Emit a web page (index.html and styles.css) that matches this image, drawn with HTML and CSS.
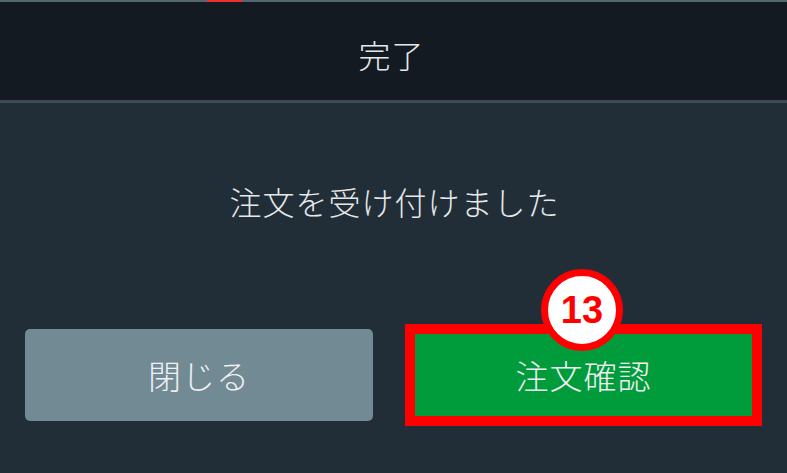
FILE: index.html
```html
<!DOCTYPE html>
<html lang="ja">

<head>
    <meta charset="UTF-8">
    <meta name="viewport" content="width=device-width, initial-scale=1.0">
    <link rel="stylesheet" href="styles.css">
</head>

<body>
    <!-- Obere Leiste -->
    <div class="top-strip">
        <span class="top-mark"></span>
    </div>

    <!-- Kopfbereich -->
    <header class="dialog-header">
        <h1>完了</h1>
    </header>

    <!-- Inhalt des Dialogs -->
    <main class="dialog-body">
        <p class="message">注文を受け付けました</p>

        <div class="actions">
            <button class="btn btn-close">閉じる</button>
            <div class="highlight">
                <span class="badge">13</span>
                <button class="btn btn-confirm">注文確認</button>
            </div>
        </div>
    </main>
</body>

</html>
```

FILE: styles.css
```css
/* Grundlayout */
body {
    margin: 0;
    padding: 0;
    width: 787px;
    height: 473px;
    overflow: hidden;
    background-color: #212e38;
    font-family: 'Noto Sans CJK JP', 'Noto Sans', sans-serif;
    font-weight: 300;
    color: #e6e8ea;
}

/* Dünne Leiste ganz oben */
.top-strip {
    height: 2px;
    background-color: #55656e;
    padding-left: 207px;
}

.top-mark {
    display: block;
    width: 35px;
    height: 2px;
    background-color: #f0302e;
}

/* Kopfbereich */
.dialog-header {
    height: 98px;
    background-color: #131a22;
    border-bottom: 3px solid #3c4b56;
    display: flex;
    align-items: center;
    justify-content: center;
}

.dialog-header h1 {
    margin: 0;
    font-size: 32px;
    font-weight: 300;
    letter-spacing: 1px;
    padding-top: 6px;
    padding-right: 4px;
}

/* Inhalt */
.dialog-body {
    padding: 0 25px;
}

.message {
    margin: 0;
    height: 196px;
    line-height: 196px;
    text-align: center;
    font-size: 32px;
    letter-spacing: 1px;
    padding-left: 2px;
}

.actions {
    display: flex;
    justify-content: space-between;
    align-items: flex-start;
    padding-top: 30px;
}

.btn {
    border: none;
    font-family: inherit;
    font-weight: 300;
    font-size: 33px;
    color: #eef0f1;
    cursor: pointer;
}

.btn-close {
    width: 348px;
    height: 92px;
    border-radius: 5px;
    background-color: #728a94;
    letter-spacing: 1px;
}

/* Rote Markierung um den Bestätigungsbutton */
.highlight {
    position: relative;
    margin-top: -5px;
    margin-right: 0;
    border: 10px solid #ff0000;
}

.btn-confirm {
    display: block;
    width: 337px;
    height: 82px;
    background-color: #009c3b;
    letter-spacing: 1px;
}

.badge {
    position: absolute;
    left: 126px;
    top: -65px;
    width: 68px;
    height: 68px;
    border: 7px solid #ff0000;
    border-radius: 50%;
    background-color: #fff;
    color: #ff0000;
    font-family: 'Liberation Sans', Arial, sans-serif;
    font-weight: bold;
    font-size: 38px;
    line-height: 68px;
    text-align: center;
    z-index: 1;
}
```
